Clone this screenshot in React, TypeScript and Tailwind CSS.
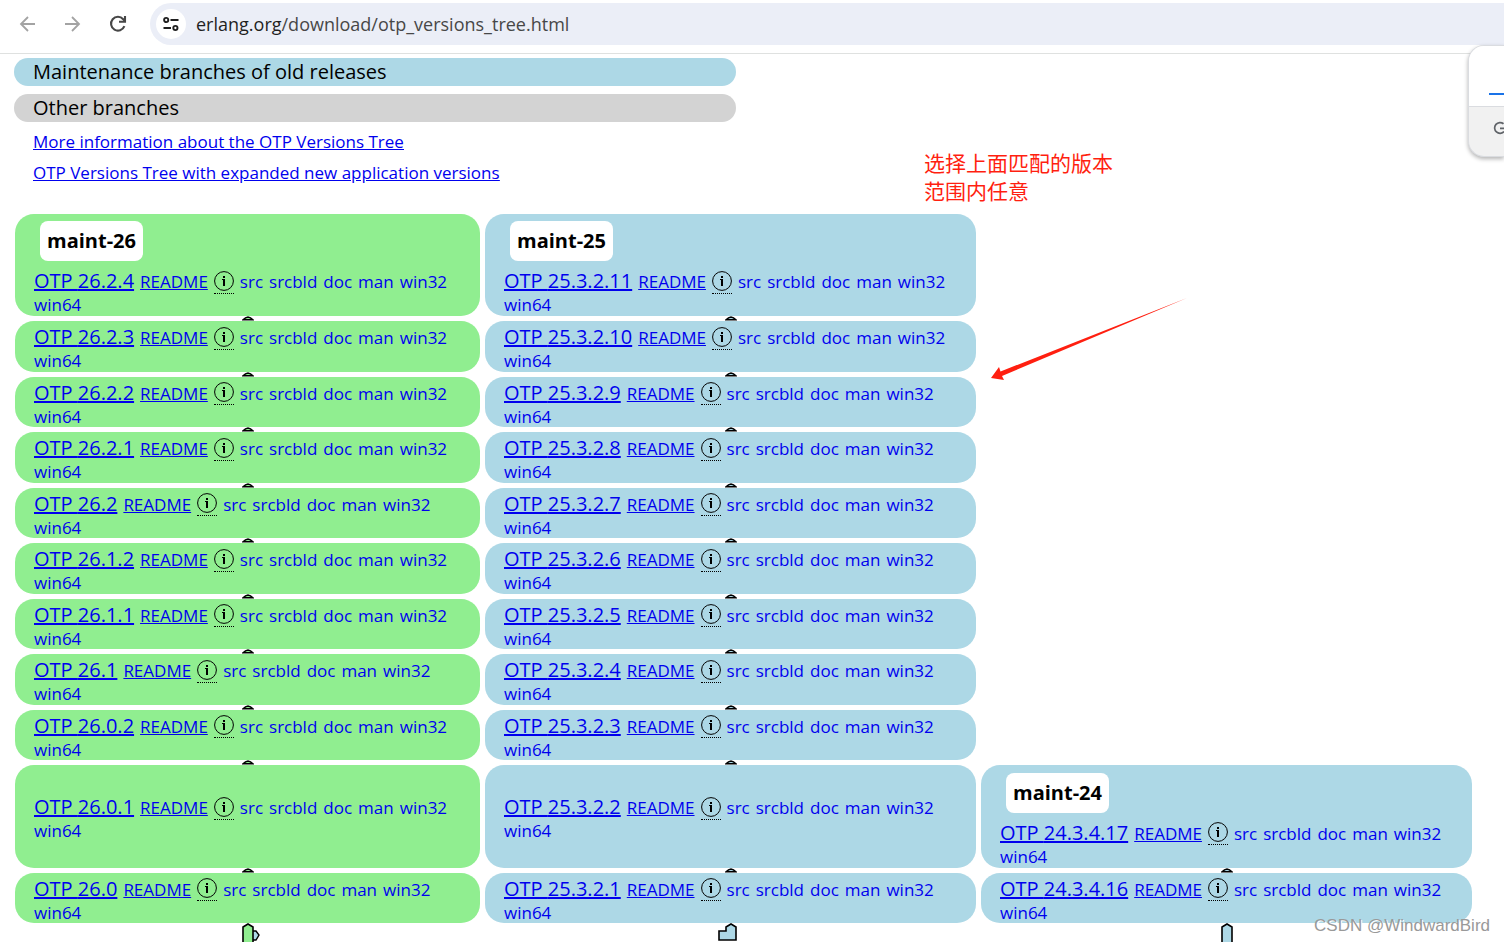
import React from 'react';
import { clsx } from 'clsx';

type Release = {
    version: string;
    branch?: string;
    merge?: 'double' | 'bent' | 'plain';
};

type Row = {
    height: string;
    cells: (Release | null)[];
};

const TALL = 'h-[103px]';
const ODD = 'h-[51px]';
const EVEN = 'h-[50px]';

const rows: Row[] = [
    {
        height: 'h-[102px]',
        cells: [{ version: '26.2.4', branch: 'maint-26' }, { version: '25.3.2.11', branch: 'maint-25' }, null],
    },
    { height: ODD, cells: [{ version: '26.2.3' }, { version: '25.3.2.10' }, null] },
    { height: EVEN, cells: [{ version: '26.2.2' }, { version: '25.3.2.9' }, null] },
    { height: ODD, cells: [{ version: '26.2.1' }, { version: '25.3.2.8' }, null] },
    { height: EVEN, cells: [{ version: '26.2' }, { version: '25.3.2.7' }, null] },
    { height: ODD, cells: [{ version: '26.1.2' }, { version: '25.3.2.6' }, null] },
    { height: EVEN, cells: [{ version: '26.1.1' }, { version: '25.3.2.5' }, null] },
    { height: ODD, cells: [{ version: '26.1' }, { version: '25.3.2.4' }, null] },
    { height: EVEN, cells: [{ version: '26.0.2' }, { version: '25.3.2.3' }, null] },
    {
        height: TALL,
        cells: [{ version: '26.0.1' }, { version: '25.3.2.2' }, { version: '24.3.4.17', branch: 'maint-24' }],
    },
    {
        height: EVEN,
        cells: [
            { version: '26.0', merge: 'double' },
            { version: '25.3.2.1', merge: 'bent' },
            { version: '24.3.4.16', merge: 'plain' },
        ],
    },
];

const downloads = ['src', 'srcbld', 'doc', 'man', 'win32', 'win64'];

const InfoIcon = () => (
    <svg width="20" height="20" viewBox="0 0 20 20" className="block" aria-hidden="true">
        <circle cx="10" cy="10" r="9.4" fill="none" stroke="#000" strokeWidth="1" />
        <rect x="9" y="5" width="2" height="2" fill="#000" />
        <path d="M8 8 H11 V15 H9 V9 H8 Z" fill="#000" />
    </svg>
);

// Small arrow head between two releases
const Arrow = ({ fill }: { fill: string }) => (
    <svg
        width="12"
        height="5"
        viewBox="0 0 12 5"
        className="absolute -top-[5px] left-1/2 -translate-x-1/2"
        aria-hidden="true"
    >
        <path d="M1 3.8 L3.5 1.8 L6 1 L8.5 1.8 L11 3.8 Z" fill={fill} stroke="#000" strokeWidth="1.5" />
    </svg>
);

const Merge = ({ kind }: { kind: 'double' | 'bent' | 'plain' }) => (
    <svg
        width="36"
        height="20"
        viewBox="0 0 36 20"
        className="absolute top-full left-1/2 -translate-x-1/2"
        aria-hidden="true"
    >
        {kind === 'double' && (
            <>
                <path d="M21 8 H26 L29 12 L26 17 H21 Z" fill="#add8e6" stroke="#000" strokeWidth="1.4" />
                <path d="M13 24 V4 L18 1 L23 4 V24" fill="#90ee90" stroke="#000" strokeWidth="1.6" />
            </>
        )}
        {kind === 'bent' && (
            <path d="M6 17 V8 H13 V4 L18 1 L23 4 V17 Z" fill="#add8e6" stroke="#000" strokeWidth="1.6" />
        )}
        {kind === 'plain' && (
            <path d="M13 24 V4 L18 1 L23 4 V24" fill="#add8e6" stroke="#000" strokeWidth="1.6" />
        )}
    </svg>
);

const ReleaseCell = ({ release, column, first }: { release: Release; column: number; first: boolean }) => {
    const hasArrow = !first && !release.branch;

    return (
        <td
            className={clsx(
                'relative rounded-[19px] pt-0.5 pr-4 pb-0 pl-[19px] align-middle',
                column === 0 ? 'bg-[#90ee90]' : 'bg-[#add8e6]',
            )}
        >
            {hasArrow && <Arrow fill={column === 0 ? '#90ee90' : '#add8e6'} />}
            {release.branch && (
                <b className="mt-[3px] mb-2 ml-1.5 block h-10 w-fit rounded-lg bg-white px-[7px] text-xl leading-10">
                    {release.branch}
                </b>
            )}
            <div className="-mb-0.5 flex flex-wrap items-baseline gap-x-1.5 text-[17px] leading-[23px] text-[#0000ee]">
                <a href="#" className="text-xl leading-[23px] underline decoration-2">
                    OTP {release.version}
                </a>
                <a href="#" className="underline">
                    README
                </a>
                <abbr title="Applications" className="-my-1 self-center border-b border-dotted border-black pt-0.5 pb-0.5 no-underline">
                    <InfoIcon />
                </abbr>
                {downloads.map((name) => (
                    <a key={name} href="#">
                        {name}
                    </a>
                ))}
            </div>
            {release.merge && <Merge kind={release.merge} />}
        </td>
    );
};

const BrowserBar = () => (
    <header className="flex h-[54px] items-start border-b border-[#dfe1e0] bg-white pt-[3px] pl-[17px]">
        <nav className="flex h-[42px] items-center gap-[23px]">
            <button type="button" aria-label="Back">
                <svg width="22" height="22" viewBox="0 0 22 22" fill="none" stroke="#a3a3a3" strokeWidth="1.8">
                    <path d="M18 11 H4.5 M11 4 L4 11 L11 18" />
                </svg>
            </button>
            <button type="button" aria-label="Forward">
                <svg width="22" height="22" viewBox="0 0 22 22" fill="none" stroke="#a3a3a3" strokeWidth="1.8">
                    <path d="M3 11 H16.5 M10 4 L17 11 L10 18" />
                </svg>
            </button>
            <button type="button" aria-label="Reload">
                <svg width="22" height="22" viewBox="0 0 22 22" fill="none" stroke="#474747" strokeWidth="2.1">
                    <path d="M17.4 13.2 A6.9 6.9 0 1 1 16.2 6.2 L17.5 8" />
                    <path d="M18 3 V8.8 H12" />
                </svg>
            </button>
        </nav>
        <div className="ml-[21px] flex h-[42px] flex-1 items-center rounded-l-full bg-[#ebeef7] pl-1.5">
            <button
                type="button"
                aria-label="View site information"
                className="flex size-[30px] items-center justify-center rounded-full bg-white"
            >
                <svg width="18" height="18" viewBox="0 0 18 18" fill="none" stroke="#1f1f1f" strokeWidth="1.9">
                    <circle cx="4.2" cy="5" r="2.1" />
                    <path d="M8.5 5 H16.5 M1.5 13 H9" />
                    <circle cx="13.4" cy="13" r="2.1" />
                </svg>
            </button>
            <p className="pl-2.5 text-lg leading-6 text-[#474747]">
                <span className="text-[#1f1f1f]">erlang.org</span>/download/otp_versions_tree.html
            </p>
        </div>
    </header>
);

const TranslatePopup = () => (
    <aside className="absolute top-[45px] right-0 w-9 overflow-hidden rounded-l-2xl border border-r-0 border-[#dadce0] bg-[#f1f1f1] shadow-[0_2px_4px_rgba(0,0,0,0.3)]">
        <div className="flex h-[61px] items-end justify-end border-b border-[#dadce0] bg-white pb-[11px]">
            <div className="h-0.5 w-[15px] bg-[#1a73e8]" />
        </div>
        <div className="flex h-[49px] justify-end overflow-hidden pt-3.5">
            <svg width="11" height="14" viewBox="0 0 11 14" fill="none" stroke="#5f6368" strokeWidth="1.7">
                <path d="M10.5 2.8 A5.4 5.4 0 1 0 11 10.6 M7 7.4 H12" />
            </svg>
        </div>
    </aside>
);

const Annotation = () => (
    <>
        <p className="absolute top-[148px] left-[924px] font-['Noto_Sans_CJK_SC',sans-serif] text-[21px] leading-7 text-[#ff1f10]">
            选择上面匹配的版本
            <br />
            范围内任意
        </p>
        <svg
            width="200"
            height="86"
            viewBox="0 0 200 86"
            className="absolute top-[296px] left-[990px]"
            aria-hidden="true"
        >
            <path d="M1 82 L9 71 L10.5 75.5 L197 2 L12 80 L14 84 Z" fill="#ff1f10" />
        </svg>
    </>
);

const App: React.FC = () => {
    return (
        <div className="relative h-screen overflow-hidden bg-white font-['Open_Sans','Noto_Sans',sans-serif] text-black">
            <BrowserBar />
            <main>
                {/* Legend */}
                <section className="pt-1">
                    <div className="ml-3.5 flex w-[48%] flex-col gap-2 text-xl leading-7">
                        <p className="rounded-full bg-[#add8e6] pl-[19px]">Maintenance branches of old releases</p>
                        <p className="rounded-full bg-[#d3d3d3] pl-[19px]">Other branches</p>
                    </div>
                    <div className="mt-2 flex flex-col items-start gap-[7px] pl-[33px] text-[17px] leading-6 text-[#0000ee] underline">
                        <a href="#">More information about the OTP Versions Tree</a>
                        <a href="#">OTP Versions Tree with expanded new application versions</a>
                    </div>
                </section>

                {/* Versions tree */}
                <div className="mt-6 pr-[27px] pl-2.5">
                    <table className="w-full table-fixed border-separate border-spacing-[5px]">
                        <colgroup>
                            <col className="w-[465px]" />
                            <col />
                            <col />
                        </colgroup>
                        <tbody>
                            {rows.map((row, index) => (
                                <tr key={index} className={row.height}>
                                    {row.cells.map((release, column) =>
                                        release ? (
                                            <ReleaseCell
                                                key={column}
                                                release={release}
                                                column={column}
                                                first={index === 0}
                                            />
                                        ) : (
                                            <td key={column} />
                                        ),
                                    )}
                                </tr>
                            ))}
                        </tbody>
                    </table>
                </div>
            </main>

            <TranslatePopup />
            <Annotation />
            <span className="absolute right-3.5 bottom-1 font-['Liberation_Sans',sans-serif] text-[17px] leading-6 text-[#999999] [text-shadow:1px_1px_0_#ffffff]">
                CSDN @WindwardBird
            </span>
        </div>
    );
};

export default App;
